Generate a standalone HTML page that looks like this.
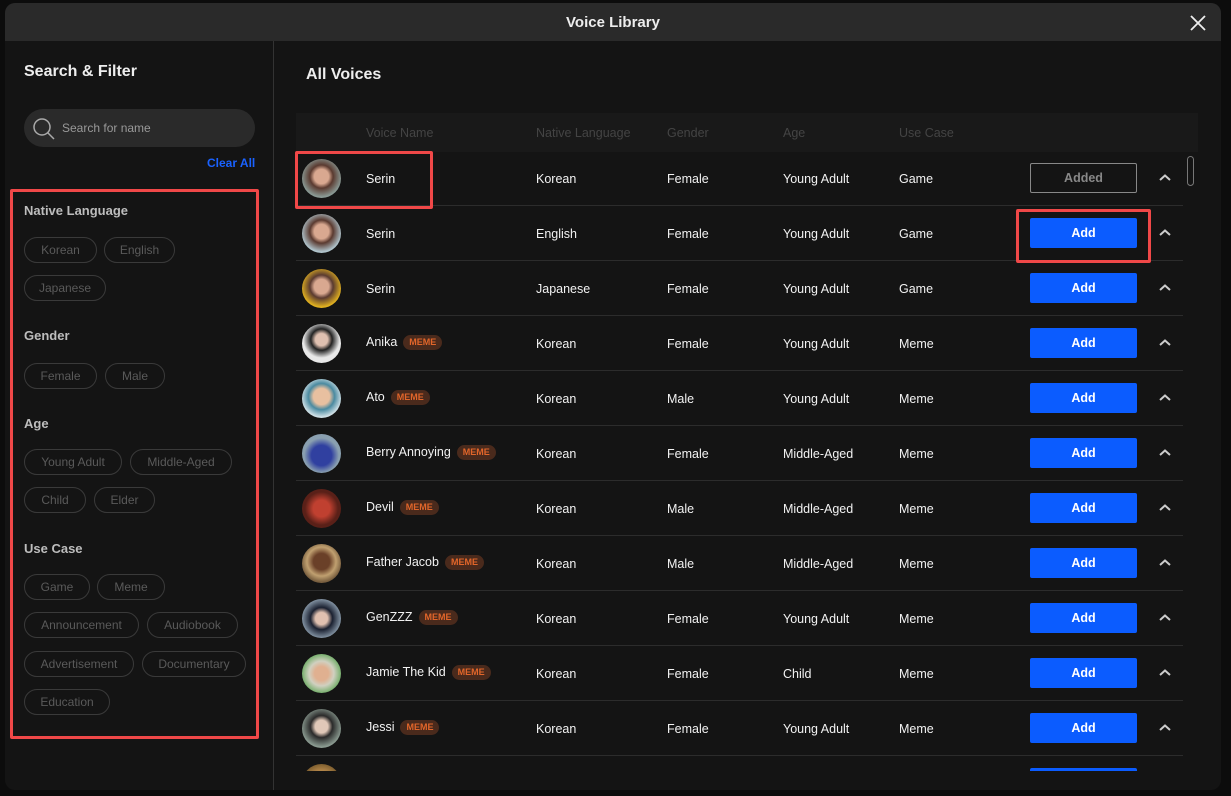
<!DOCTYPE html>
<html><head><meta charset="utf-8"><style>
*{box-sizing:border-box;margin:0;padding:0}
body{width:1231px;height:796px;background:#0c0c0c;font-family:"Liberation Sans",sans-serif;position:relative;overflow:hidden;color:#fff}
.modal{position:absolute;left:5px;top:3px;width:1216px;height:787px;background:#141414;border-radius:10px;overflow:hidden}
.title{position:absolute;left:0;top:0;width:100%;height:38px;background:#2a2a2a;text-align:center;line-height:40px;font-size:15px;font-weight:bold;color:#eee}
.x{position:absolute;right:14px;top:11px;width:18px;height:18px}
.div{position:absolute;left:268px;top:38px;width:1px;height:760px;background:#333}
.a{position:absolute}
.chip{position:absolute;height:26px;border:1px solid #3a3a3a;border-radius:13px;color:#5a5a5a;font-size:12px;line-height:24px;text-align:center}
.sec{position:absolute;left:24px;font-size:13px;font-weight:bold;color:#bdbdbd}
.row{position:absolute;left:296px;width:887px;height:55px;border-bottom:1px solid #2c2c2c}
.row span{position:absolute;top:1px;line-height:54px;font-size:12.5px;color:#f2f2f2}
.av{position:absolute;left:6px;top:8px;width:39px;height:39px;border-radius:50%}
.btn{position:absolute;left:734px;top:12px;width:107px;height:30px;background:#0b5cff;border-radius:2px;color:#fff;font-weight:bold;font-size:12.5px;text-align:center;line-height:30px}
.chev{position:absolute;left:863px;top:22px;width:12px;height:10px}
.meme{display:inline-block;margin-left:6px;background:#4a2a1c;color:#e2662a;font-size:9px;font-weight:bold;border-radius:8px;padding:0 6px;line-height:15px;vertical-align:1px}
</style></head><body>
<div class="modal">
<div class="title">Voice Library</div>
<svg class="x" viewBox="0 0 18 18"><path d="M2 2L16 16M16 2L2 16" stroke="#eee" stroke-width="1.8"/></svg>
<div class="div"></div>
</div>
<div class="a" style="left:24px;top:63px;font-size:16px;font-weight:bold;color:#eee">Search &amp; Filter</div>
<div class="a" style="left:24px;top:109px;width:231px;height:38px;background:#2a2a2a;border-radius:19px"></div>
<svg class="a" style="left:32px;top:117px" width="24" height="24" viewBox="0 0 24 24"><circle cx="10" cy="10" r="8" stroke="#aaa" stroke-width="1.5" fill="none"/><path d="M16 16L22 22" stroke="#aaa" stroke-width="1.5"/></svg>
<div class="a" style="left:62px;top:121px;font-size:12px;color:#999">Search for name</div>
<div class="a" style="left:207px;top:156px;font-size:12px;font-weight:bold;color:#1a62ff">Clear All</div>
<div class="a" style="left:10px;top:189px;width:249px;height:550px;border:3px solid #f04848;border-radius:2px"></div>
<div class="sec" style="top:203px">Native Language</div>
<div class="chip" style="left:24px;top:237px;width:73px">Korean</div>
<div class="chip" style="left:104px;top:237px;width:71px">English</div>
<div class="chip" style="left:24px;top:275px;width:82px">Japanese</div>
<div class="sec" style="top:328px">Gender</div>
<div class="chip" style="left:24px;top:363px;width:73px">Female</div>
<div class="chip" style="left:105px;top:363px;width:60px">Male</div>
<div class="sec" style="top:416px">Age</div>
<div class="chip" style="left:24px;top:449px;width:98px">Young Adult</div>
<div class="chip" style="left:130px;top:449px;width:102px">Middle-Aged</div>
<div class="chip" style="left:24px;top:487px;width:62px">Child</div>
<div class="chip" style="left:94px;top:487px;width:61px">Elder</div>
<div class="sec" style="top:541px">Use Case</div>
<div class="chip" style="left:24px;top:574px;width:66px">Game</div>
<div class="chip" style="left:97px;top:574px;width:68px">Meme</div>
<div class="chip" style="left:24px;top:612px;width:115px">Announcement</div>
<div class="chip" style="left:147px;top:612px;width:91px">Audiobook</div>
<div class="chip" style="left:24px;top:651px;width:110px">Advertisement</div>
<div class="chip" style="left:142px;top:651px;width:104px">Documentary</div>
<div class="chip" style="left:24px;top:689px;width:86px">Education</div>

<div class="a" style="left:306px;top:66px;font-size:16px;font-weight:bold;color:#eee">All Voices</div>
<div class="a" style="left:296px;top:113px;width:902px;height:39px;background:#191919;font-size:12.5px;color:#444;line-height:41px">
<span class="a" style="left:70px">Voice Name</span><span class="a" style="left:240px">Native Language</span><span class="a" style="left:371px">Gender</span><span class="a" style="left:487px">Age</span><span class="a" style="left:603px">Use Case</span></div>
<div class="a" style="left:1187px;top:156px;width:7px;height:30px;border:1px solid #777;border-radius:4px"></div>

<div class="a" style="left:0;top:151px;width:1231px;height:620px;overflow:hidden">
<div style="position:relative;top:-151px">
<div class="row" style="top:151px"><div class="av" style="background:radial-gradient(circle at 50% 45%,#d9a890 0 25%,#5a3a30 40%,#8a9a95 70%)"></div><span style="left:70px">Serin</span><span style="left:240px">Korean</span><span style="left:371px">Female</span><span style="left:487px">Young Adult</span><span style="left:603px">Game</span><div class="btn" style="background:none;border:1px solid #888;color:#888;line-height:28px">Added</div><svg class="chev" viewBox="0 0 12 10"><path d="M1 7L6 2.5L11 7" stroke="#ccc" stroke-width="2" fill="none"/></svg></div>
<div class="row" style="top:206px"><div class="av" style="background:radial-gradient(circle at 50% 45%,#d9a890 0 25%,#5a3a30 40%,#b0c4cc 70%)"></div><span style="left:70px">Serin</span><span style="left:240px">English</span><span style="left:371px">Female</span><span style="left:487px">Young Adult</span><span style="left:603px">Game</span><div class="btn">Add</div><svg class="chev" viewBox="0 0 12 10"><path d="M1 7L6 2.5L11 7" stroke="#ccc" stroke-width="2" fill="none"/></svg></div>
<div class="row" style="top:261px"><div class="av" style="background:radial-gradient(circle at 50% 45%,#d9a890 0 25%,#5a3a30 40%,#e0b020 70%)"></div><span style="left:70px">Serin</span><span style="left:240px">Japanese</span><span style="left:371px">Female</span><span style="left:487px">Young Adult</span><span style="left:603px">Game</span><div class="btn">Add</div><svg class="chev" viewBox="0 0 12 10"><path d="M1 7L6 2.5L11 7" stroke="#ccc" stroke-width="2" fill="none"/></svg></div>
<div class="row" style="top:316px"><div class="av" style="background:radial-gradient(circle at 50% 40%,#e0c0b0 0 20%,#222 35%,#e8e8e8 60%)"></div><span style="left:70px;line-height:50px">Anika<i class="meme" style="font-style:normal">MEME</i></span><span style="left:240px">Korean</span><span style="left:371px">Female</span><span style="left:487px">Young Adult</span><span style="left:603px">Meme</span><div class="btn">Add</div><svg class="chev" viewBox="0 0 12 10"><path d="M1 7L6 2.5L11 7" stroke="#ccc" stroke-width="2" fill="none"/></svg></div>
<div class="row" style="top:371px"><div class="av" style="background:radial-gradient(circle at 50% 45%,#e8c0a0 0 28%,#4a8aa0 45%,#cfe0e6 70%)"></div><span style="left:70px;line-height:50px">Ato<i class="meme" style="font-style:normal">MEME</i></span><span style="left:240px">Korean</span><span style="left:371px">Male</span><span style="left:487px">Young Adult</span><span style="left:603px">Meme</span><div class="btn">Add</div><svg class="chev" viewBox="0 0 12 10"><path d="M1 7L6 2.5L11 7" stroke="#ccc" stroke-width="2" fill="none"/></svg></div>
<div class="row" style="top:426px"><div class="av" style="background:radial-gradient(circle at 50% 55%,#3040a0 0 35%,#8aa0b0 60%)"></div><span style="left:70px;line-height:50px">Berry Annoying<i class="meme" style="font-style:normal">MEME</i></span><span style="left:240px">Korean</span><span style="left:371px">Female</span><span style="left:487px">Middle-Aged</span><span style="left:603px">Meme</span><div class="btn">Add</div><svg class="chev" viewBox="0 0 12 10"><path d="M1 7L6 2.5L11 7" stroke="#ccc" stroke-width="2" fill="none"/></svg></div>
<div class="row" style="top:481px"><div class="av" style="background:radial-gradient(circle at 50% 50%,#c04030 0 30%,#5a2018 60%)"></div><span style="left:70px;line-height:50px">Devil<i class="meme" style="font-style:normal">MEME</i></span><span style="left:240px">Korean</span><span style="left:371px">Male</span><span style="left:487px">Middle-Aged</span><span style="left:603px">Meme</span><div class="btn">Add</div><svg class="chev" viewBox="0 0 12 10"><path d="M1 7L6 2.5L11 7" stroke="#ccc" stroke-width="2" fill="none"/></svg></div>
<div class="row" style="top:536px"><div class="av" style="background:radial-gradient(circle at 50% 45%,#6a4028 0 28%,#c0a070 50%,#7a6040 70%)"></div><span style="left:70px;line-height:50px">Father Jacob<i class="meme" style="font-style:normal">MEME</i></span><span style="left:240px">Korean</span><span style="left:371px">Male</span><span style="left:487px">Middle-Aged</span><span style="left:603px">Meme</span><div class="btn">Add</div><svg class="chev" viewBox="0 0 12 10"><path d="M1 7L6 2.5L11 7" stroke="#ccc" stroke-width="2" fill="none"/></svg></div>
<div class="row" style="top:591px"><div class="av" style="background:radial-gradient(circle at 50% 50%,#e0c0b0 0 22%,#1a2030 40%,#8090a0 70%)"></div><span style="left:70px;line-height:50px">GenZZZ<i class="meme" style="font-style:normal">MEME</i></span><span style="left:240px">Korean</span><span style="left:371px">Female</span><span style="left:487px">Young Adult</span><span style="left:603px">Meme</span><div class="btn">Add</div><svg class="chev" viewBox="0 0 12 10"><path d="M1 7L6 2.5L11 7" stroke="#ccc" stroke-width="2" fill="none"/></svg></div>
<div class="row" style="top:646px"><div class="av" style="background:radial-gradient(circle at 50% 50%,#e0b090 0 25%,#d0d0c0 45%,#7ab070 70%)"></div><span style="left:70px;line-height:50px">Jamie The Kid<i class="meme" style="font-style:normal">MEME</i></span><span style="left:240px">Korean</span><span style="left:371px">Female</span><span style="left:487px">Child</span><span style="left:603px">Meme</span><div class="btn">Add</div><svg class="chev" viewBox="0 0 12 10"><path d="M1 7L6 2.5L11 7" stroke="#ccc" stroke-width="2" fill="none"/></svg></div>
<div class="row" style="top:701px"><div class="av" style="background:radial-gradient(circle at 50% 45%,#e0c8b8 0 22%,#2a2a2a 38%,#8a9a90 70%)"></div><span style="left:70px;line-height:50px">Jessi<i class="meme" style="font-style:normal">MEME</i></span><span style="left:240px">Korean</span><span style="left:371px">Female</span><span style="left:487px">Young Adult</span><span style="left:603px">Meme</span><div class="btn">Add</div><svg class="chev" viewBox="0 0 12 10"><path d="M1 7L6 2.5L11 7" stroke="#ccc" stroke-width="2" fill="none"/></svg></div>
<div class="row" style="top:756px"><div class="av" style="background:radial-gradient(circle at 50% 50%,#c09050 0 40%,#806030 70%)"></div><div class="btn">Add</div></div>
</div></div>

<div class="a" style="left:295px;top:151px;width:138px;height:58px;border:3px solid #f04848;border-radius:2px"></div>
<div class="a" style="left:1016px;top:209px;width:135px;height:54px;border:3px solid #f04848;border-radius:2px"></div>
</body></html>
